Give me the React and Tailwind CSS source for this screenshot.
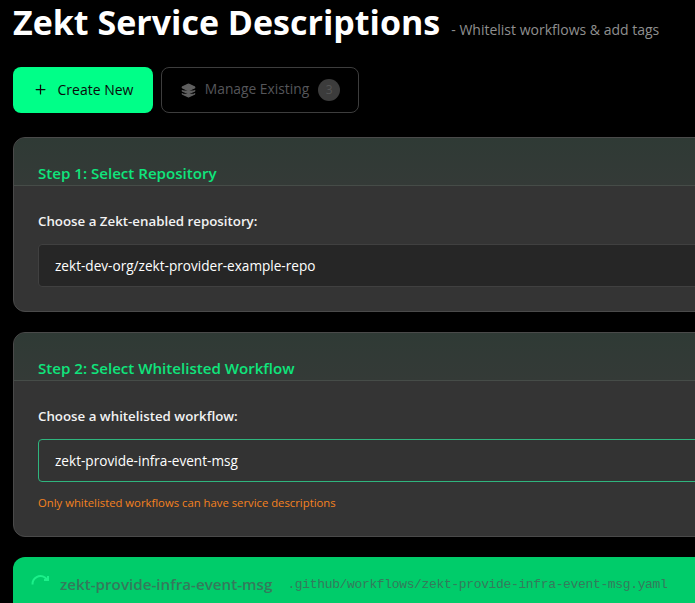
import React from 'react';
import { Plus, Layers } from 'lucide-react';

const StepCard = ({ title, label, value, active, hint }) => (
  <div className="rounded-[12px] border border-[#4a4a4a] bg-[#343434] overflow-hidden">
    <div className="h-[48px] px-6 pt-[24px] border-b border-[#464c48] bg-gradient-to-b from-[#2f3a35] to-[#343a37]">
      <h2 className="text-[15.1px] leading-[22px] font-semibold text-[#0fe57c]">{title}</h2>
    </div>
    <div className="px-6 pt-[25px] pb-6">
      <label className="block text-[13.3px] leading-[20px] font-semibold text-[#f2f2f2] mb-[13px]">{label}</label>
      <div
        className={
          active
            ? 'h-[43px] flex items-center px-4 pt-[2px] rounded-[4px] border border-[#2fb57e] bg-[#333333] text-[13.6px] text-white'
            : 'h-[43px] flex items-center px-4 pt-[2px] rounded-[4px] border border-[#404040] bg-[#262626] text-[13.6px] text-white'
        }
      >
        {value}
      </div>
      {hint && <p className="mt-[12px] text-[11.3px] leading-[18px] text-[#f5821f]">{hint}</p>}
    </div>
  </div>
);

export default function App() {
  return (
    <div className="w-[695px] h-[603px] overflow-hidden bg-black font-['Open_Sans',sans-serif]">
      <div className="w-[1000px] pl-[13px]">
        <div className="flex items-baseline h-[67px]">
          <h1 className="text-[34px] leading-[44px] font-bold text-white">Zekt Service Descriptions</h1>
          <span className="ml-[11px] text-[14px] text-[#8f8f8f]">- Whitelist workflows &amp; add tags</span>
        </div>

        <div className="flex gap-2">
          <button className="h-[46px] w-[140px] pb-[2px] flex items-center justify-center gap-[10px] rounded-[8px] bg-[#00ff88] text-[14px] font-medium text-[#0a0a0a]">
            <Plus size={15} strokeWidth={2} />
            Create New
          </button>
          <button className="h-[46px] w-[198px] pl-[1px] flex items-center justify-center gap-[9px] rounded-[8px] border border-[#3d3d3d] bg-black text-[13.8px] text-[#55565a]">
            <Layers size={15} fill="#5f5f5f" stroke="#5f5f5f" strokeWidth={2} />
            <span className="pb-[2px]">Manage Existing</span>
            <span className="w-[22px] h-[22px] rounded-full bg-[#3c3c3c] flex items-center justify-center text-[12px] text-[#555555]">3</span>
          </button>
        </div>

        <div className="mt-6 flex flex-col gap-5">
          <StepCard
            title="Step 1: Select Repository"
            label="Choose a Zekt-enabled repository:"
            value="zekt-dev-org/zekt-provider-example-repo"
          />
          <StepCard
            title="Step 2: Select Whitelisted Workflow"
            label="Choose a whitelisted workflow:"
            value="zekt-provide-infra-event-msg"
            active
            hint="Only whitelisted workflows can have service descriptions"
          />
          <div className="h-[70px] rounded-[12px] bg-[#00cc6a] flex items-start pt-[16px] pl-[18px]">
            <svg viewBox="0 0 20 20" className="w-[20px] h-[20px] mr-[9px] text-[#1cf08a]" fill="none" stroke="currentColor" strokeWidth="2">
              <path d="M1.5 11.5 A8 8 0 0 1 14 4.5 L16 6.5" />
              <path d="M17 3 V7 H13" />
            </svg>
            <span className="text-[15.2px] leading-[22px] font-semibold text-[#357a5c]">zekt-provide-infra-event-msg</span>
            <span className="ml-[15px] font-['Liberation_Mono',monospace] text-[13px] tracking-[-0.35px] leading-[24px] text-[#357a5c]">.github/workflows/zekt-provide-infra-event-msg.yaml</span>
          </div>
        </div>
      </div>
    </div>
  );
}
